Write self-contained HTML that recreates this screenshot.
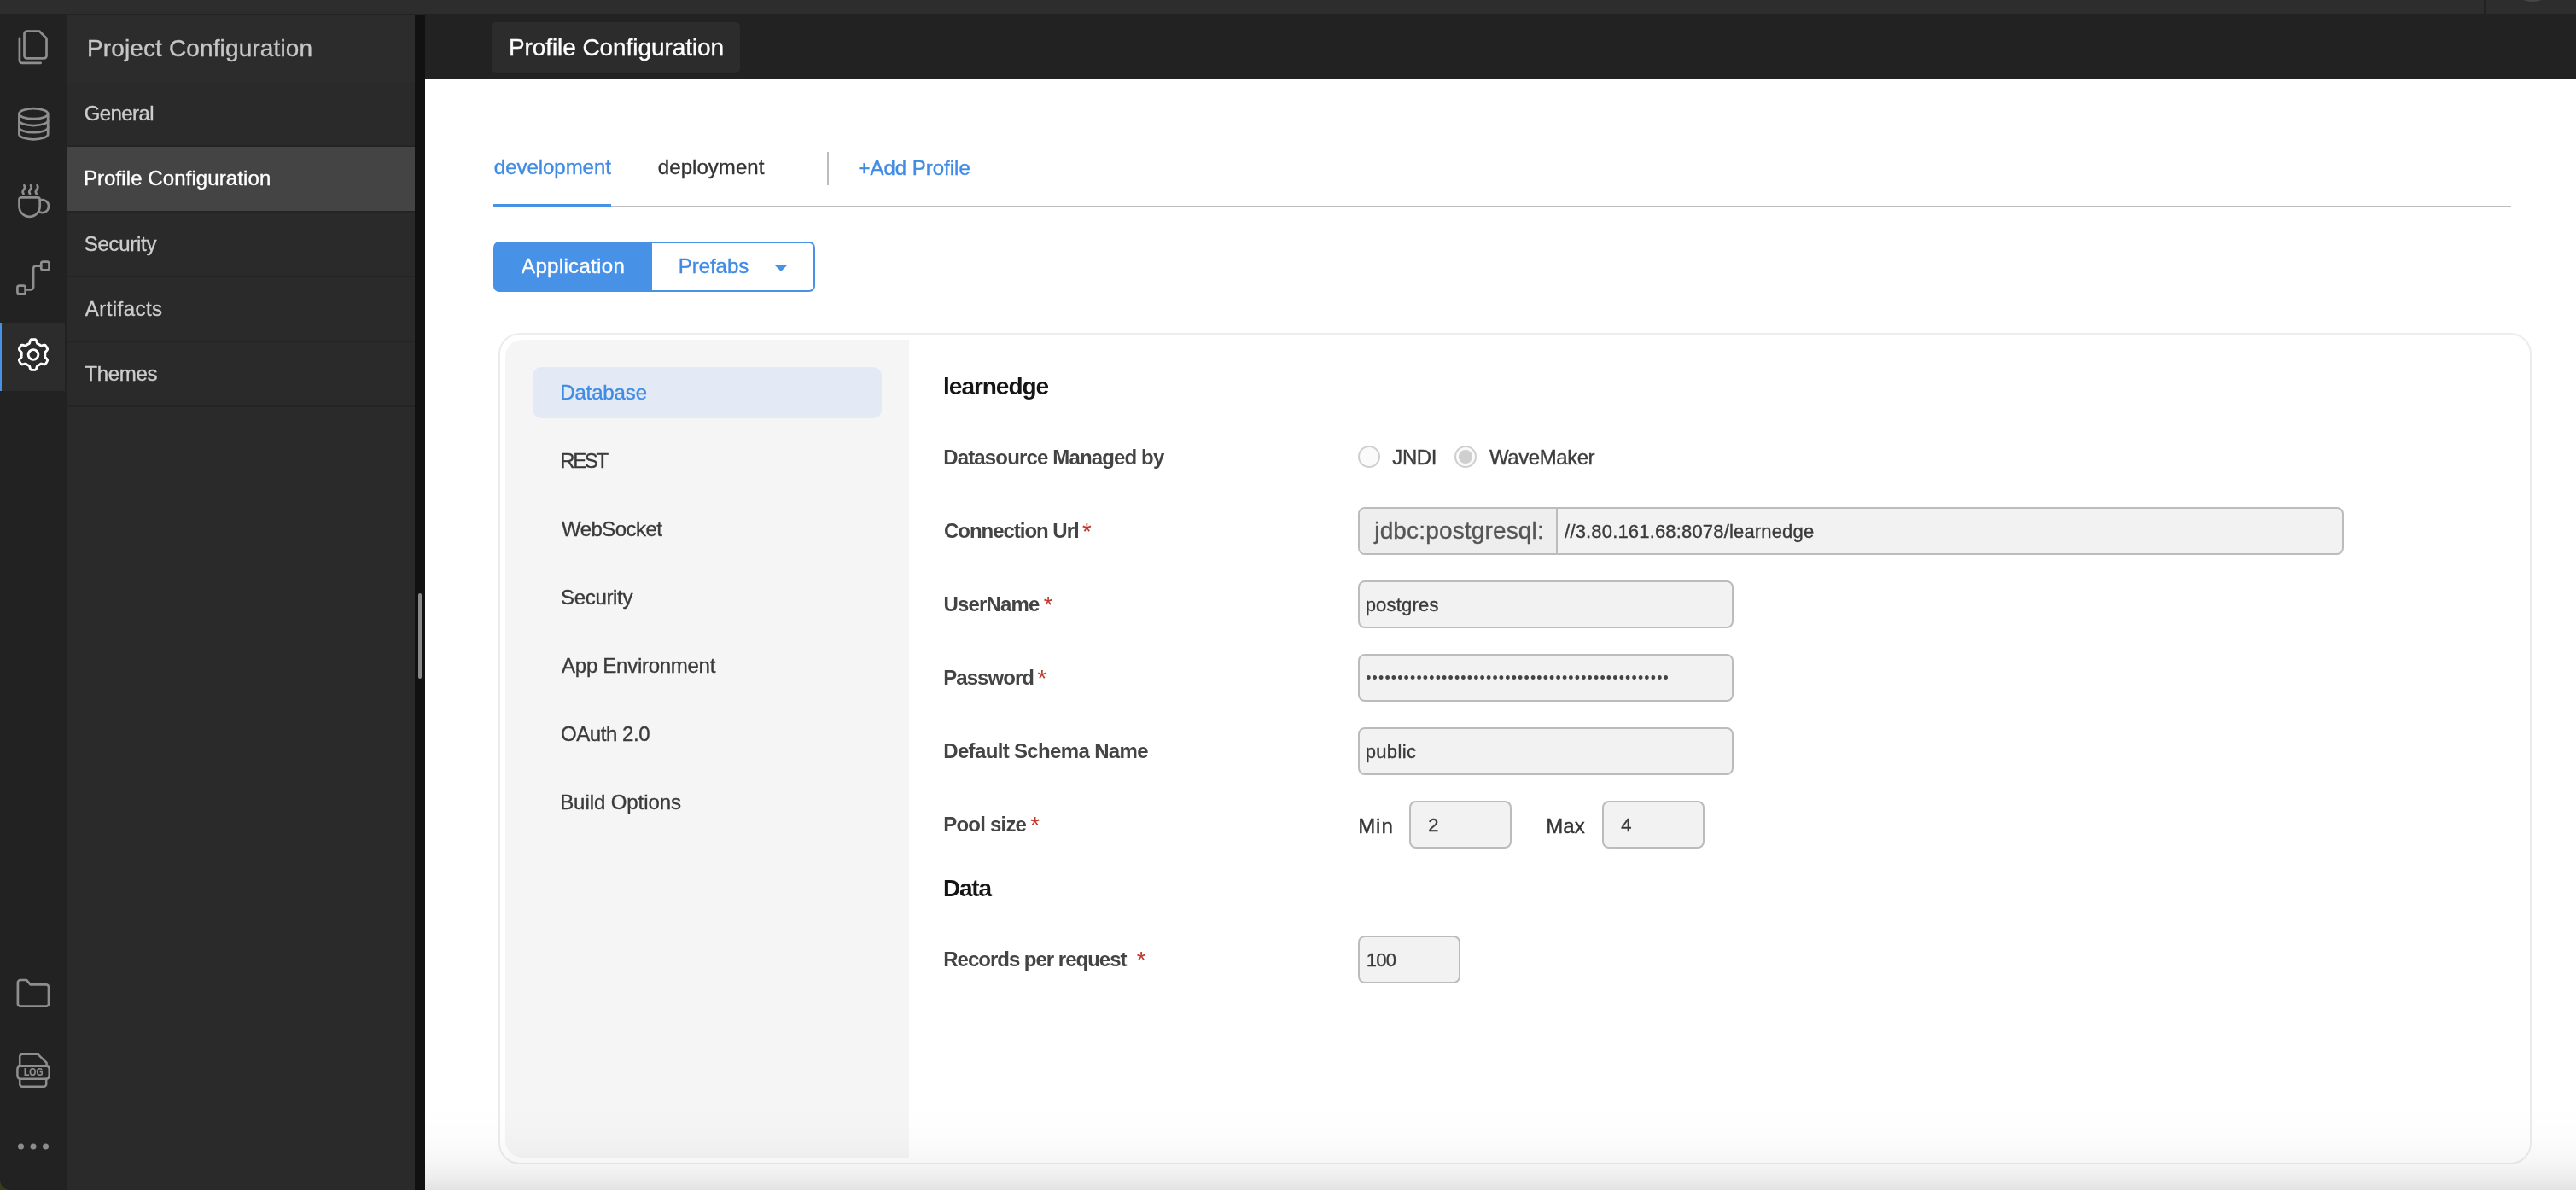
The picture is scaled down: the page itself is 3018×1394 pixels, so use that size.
<!DOCTYPE html>
<html lang="en"><head><meta charset="utf-8"><title>Profile Configuration</title>
<style>
html,body{margin:0;padding:0}
body{width:3018px;height:1394px;position:relative;overflow:hidden;background:#fff;font-family:"Liberation Sans",sans-serif;}
.a{position:absolute;box-sizing:border-box}
.t{position:absolute;white-space:pre;line-height:40px;height:40px;font-family:"Liberation Sans",sans-serif}
.inp{position:absolute;box-sizing:border-box;background:#f2f2f2;border:2px solid #bcbcbc;border-radius:8px}
.radio{position:absolute;box-sizing:border-box;width:26px;height:26px;border-radius:50%;border:2px solid #cfcfcf;background:#fafafa}
svg{position:absolute;overflow:visible}
.ic{fill:none;stroke:#8a8a8a;stroke-width:2.4;stroke-linecap:round;stroke-linejoin:round}
#root{position:absolute;left:0;top:0;width:3018px;height:1394px;overflow:hidden;will-change:transform}

</style></head>
<body>
<div id="root">
<!-- top bar -->
<div class="a" style="left:0;top:0;width:3018px;height:16px;background:#2d2d2d"></div>
<div class="a" style="left:2910px;top:0;width:2px;height:16px;background:#222"></div>
<div class="a" style="left:2935.5px;top:-59.8px;width:62px;height:62px;border-radius:50%;background:#464646"></div>
<div class="a" style="left:0;top:16px;width:3018px;height:2px;background:#232323"></div>
<!-- icon rail -->
<div class="a" style="left:0;top:16px;width:78px;height:1378px;background:#222"></div>
<div class="a" style="left:0;top:378px;width:76px;height:80px;background:#2c2c2c;border-left:2px solid #4791e6"></div>
<!-- side panel -->
<div class="a" style="left:78px;top:18px;width:408px;height:1376px;background:#2a2a2a"></div>
<div class="a" style="left:78px;top:18px;width:408px;height:78px;background:#2c2c2c"></div>
<div class="a" style="left:78px;top:170px;width:408px;height:2px;background:#242424"></div>
<div class="a" style="left:78px;top:172px;width:408px;height:75px;background:#444"></div>
<div class="a" style="left:78px;top:247px;width:408px;height:2px;background:#242424"></div>
<div class="a" style="left:78px;top:323px;width:408px;height:2px;background:#242424"></div>
<div class="a" style="left:78px;top:399px;width:408px;height:2px;background:#242424"></div>
<div class="a" style="left:78px;top:475px;width:408px;height:2px;background:#242424"></div>
<!-- splitter -->
<div class="a" style="left:486px;top:18px;width:12px;height:1376px;background:#111"></div>
<div class="a" style="left:490px;top:695px;width:4px;height:100px;background:#888;border-radius:2px"></div>
<!-- main header -->
<div class="a" style="left:498px;top:16px;width:2520px;height:76.5px;background:#222"></div>
<div class="a" style="left:576px;top:26px;width:291px;height:59px;background:#2c2c2c;border-radius:5px"></div>
<!-- tabs -->
<div class="a" style="left:578px;top:241px;width:2363.5px;height:2px;background:#bdbdbd"></div>
<div class="a" style="left:578px;top:239px;width:138px;height:4px;background:#4791e6"></div>
<div class="a" style="left:969px;top:178px;width:2px;height:39px;background:#bdbdbd"></div>
<!-- button group -->
<div class="a" style="left:578px;top:283px;width:186px;height:59px;background:#4791e6;border-radius:7px 0 0 7px"></div>
<div class="a" style="left:762px;top:283px;width:193px;height:59px;background:#fff;border:2px solid #4791e6;border-radius:0 7px 7px 0"></div>
<div class="a" style="left:907px;top:310px;width:0;height:0;border-left:8px solid transparent;border-right:8px solid transparent;border-top:8px solid #4791e6"></div>
<!-- card -->
<div class="a" style="left:584px;top:390px;width:2382px;height:974px;border:2px solid #ececec;border-radius:25px;background:#fff"></div>
<div class="a" style="left:592px;top:398px;width:473px;height:957.5px;background:#f5f5f5;border-radius:20px 0 0 20px"></div>
<div class="a" style="left:624px;top:430px;width:409px;height:60px;background:#e3eaf5;border-radius:10px"></div>
<!-- radios -->
<div class="radio" style="left:1591px;top:522px"></div>
<div class="radio" style="left:1704px;top:522px"></div>
<div class="a" style="left:1709.2px;top:527.2px;width:15.6px;height:15.6px;border-radius:50%;background:#cfcfcf"></div>
<!-- inputs -->
<div class="inp" style="left:1591px;top:594px;width:1155px;height:56px"></div>
<div class="a" style="left:1593px;top:596px;width:230px;height:52px;background:#eee;border-radius:6px 0 0 6px"></div>
<div class="a" style="left:1823px;top:596px;width:2px;height:52px;background:#bcbcbc"></div>
<div class="inp" style="left:1591px;top:680px;width:440px;height:56px"></div>
<div class="inp" style="left:1591px;top:766px;width:440px;height:56px"></div>
<div class="inp" style="left:1591px;top:852px;width:440px;height:56px"></div>
<div class="inp" style="left:1651px;top:938px;width:120px;height:56px"></div>
<div class="inp" style="left:1877px;top:938px;width:120px;height:56px"></div>
<div class="inp" style="left:1591px;top:1096px;width:120px;height:56px"></div>
<!-- bottom shade -->
<div class="a" style="left:498px;top:1294px;width:2520px;height:100px;background:linear-gradient(to bottom,rgba(0,0,0,0) 0%,rgba(0,0,0,0.008) 32%,rgba(0,0,0,0.02) 51%,rgba(0,0,0,0.035) 68%,rgba(0,0,0,0.065) 84%,rgba(0,0,0,0.11) 100%)"></div>
<div class="a" style="left:0;top:1382px;width:12px;height:12px;background:radial-gradient(circle at 12px 0,#222 11.5px,#33401c 12.5px)"></div>

<span class="t" style="left:101.91px;top:37.00px;font-size:28px;color:#c6c6c6;-webkit-text-stroke:0.35px;letter-spacing:0.134px;">Project Configuration</span>
<span class="t" style="left:98.65px;top:113.00px;font-size:24px;color:#cdcdcd;-webkit-text-stroke:0.35px;letter-spacing:-0.592px;">General</span>
<span class="t" style="left:97.95px;top:189.00px;font-size:24px;color:#ffffff;-webkit-text-stroke:0.35px;letter-spacing:0.092px;">Profile Configuration</span>
<span class="t" style="left:98.85px;top:266.00px;font-size:24px;color:#cdcdcd;-webkit-text-stroke:0.35px;letter-spacing:-0.299px;">Security</span>
<span class="t" style="left:99.85px;top:342.00px;font-size:24px;color:#cdcdcd;-webkit-text-stroke:0.35px;letter-spacing:0.433px;">Artifacts</span>
<span class="t" style="left:99.35px;top:418.00px;font-size:24px;color:#cdcdcd;-webkit-text-stroke:0.35px;letter-spacing:-0.329px;">Themes</span>
<span class="t" style="left:595.91px;top:36.00px;font-size:28px;color:#ffffff;-webkit-text-stroke:0.35px;letter-spacing:-0.072px;">Profile Configuration</span>
<span class="t" style="left:578.85px;top:176.00px;font-size:24px;color:#3f8be4;-webkit-text-stroke:0.35px;letter-spacing:-0.041px;">development</span>
<span class="t" style="left:770.85px;top:176.00px;font-size:24px;color:#333;-webkit-text-stroke:0.35px;letter-spacing:0.049px;">deployment</span>
<span class="t" style="left:1005.50px;top:177.00px;font-size:24px;color:#3f8be4;-webkit-text-stroke:0.35px;letter-spacing:-0.015px;">+Add Profile</span>
<span class="t" style="left:611.10px;top:292.00px;font-size:24px;color:#fff;-webkit-text-stroke:0.35px;letter-spacing:0.324px;">Application</span>
<span class="t" style="left:794.70px;top:292.00px;font-size:24px;color:#3f8be4;-webkit-text-stroke:0.35px;letter-spacing:-0.027px;">Prefabs</span>
<span class="t" style="left:656.20px;top:440.00px;font-size:24px;color:#3f8be4;-webkit-text-stroke:0.35px;letter-spacing:-0.134px;">Database</span>
<span class="t" style="left:656.20px;top:520.00px;font-size:24px;color:#3a3a3a;-webkit-text-stroke:0.35px;letter-spacing:-2.349px;">REST</span>
<span class="t" style="left:658.00px;top:600.00px;font-size:24px;color:#3a3a3a;-webkit-text-stroke:0.35px;letter-spacing:-0.552px;">WebSocket</span>
<span class="t" style="left:657.10px;top:680.00px;font-size:24px;color:#3a3a3a;-webkit-text-stroke:0.35px;letter-spacing:-0.335px;">Security</span>
<span class="t" style="left:658.10px;top:760.00px;font-size:24px;color:#3a3a3a;-webkit-text-stroke:0.35px;letter-spacing:-0.274px;">App Environment</span>
<span class="t" style="left:657.00px;top:840.00px;font-size:24px;color:#3a3a3a;-webkit-text-stroke:0.35px;letter-spacing:-0.440px;">OAuth 2.0</span>
<span class="t" style="left:656.20px;top:920.00px;font-size:24px;color:#3a3a3a;-webkit-text-stroke:0.35px;letter-spacing:-0.079px;">Build Options</span>
<span class="t" style="left:1105.10px;top:433.00px;font-size:28px;color:#151515;font-weight:700;letter-spacing:-1.029px;">learnedge</span>
<span class="t" style="left:1105.10px;top:1021.00px;font-size:28px;color:#151515;font-weight:700;letter-spacing:-1.256px;">Data</span>
<span class="t" style="left:1105.25px;top:516.00px;font-size:24px;color:#444;font-weight:700;letter-spacing:-0.854px;">Datasource Managed by</span>
<span class="t" style="left:1105.95px;top:602.00px;font-size:24px;color:#444;font-weight:700;letter-spacing:-1.025px;">Connection Url</span>
<span class="t" style="left:1105.45px;top:688.00px;font-size:24px;color:#444;font-weight:700;letter-spacing:-0.820px;">UserName</span>
<span class="t" style="left:1105.25px;top:774.00px;font-size:24px;color:#444;font-weight:700;letter-spacing:-0.946px;">Password</span>
<span class="t" style="left:1105.25px;top:860.00px;font-size:24px;color:#444;font-weight:700;letter-spacing:-0.655px;">Default Schema Name</span>
<span class="t" style="left:1105.25px;top:946.00px;font-size:24px;color:#444;font-weight:700;letter-spacing:-0.791px;">Pool size</span>
<span class="t" style="left:1105.25px;top:1104.00px;font-size:24px;color:#444;font-weight:700;letter-spacing:-1.010px;">Records per request</span>
<span class="t" style="left:1631.35px;top:516.00px;font-size:24px;color:#3d3d3d;-webkit-text-stroke:0.35px;letter-spacing:-0.405px;">JNDI</span>
<span class="t" style="left:1745.00px;top:516.00px;font-size:24px;color:#3d3d3d;-webkit-text-stroke:0.35px;letter-spacing:-0.443px;">WaveMaker</span>
<span class="t" style="left:1610.27px;top:602.00px;font-size:28px;color:#555;-webkit-text-stroke:0.35px;letter-spacing:0.156px;">jdbc:postgresql:</span>
<span class="t" style="left:1833.10px;top:603.00px;font-size:22px;color:#3a3a3a;-webkit-text-stroke:0.35px;letter-spacing:0.169px;">//3.80.161.68:8078/learnedge</span>
<span class="t" style="left:1599.70px;top:689.00px;font-size:22px;color:#3a3a3a;-webkit-text-stroke:0.35px;letter-spacing:0.189px;">postgres</span>
<span class="t" style="left:1599.70px;top:861.00px;font-size:22px;color:#3a3a3a;-webkit-text-stroke:0.35px;letter-spacing:0.354px;">public</span>
<span class="t" style="left:1673.25px;top:947.00px;font-size:22px;color:#3a3a3a;-webkit-text-stroke:0.35px;">2</span>
<span class="t" style="left:1899.35px;top:947.00px;font-size:22px;color:#3a3a3a;-webkit-text-stroke:0.35px;">4</span>
<span class="t" style="left:1600.75px;top:1105.00px;font-size:22px;color:#3a3a3a;-webkit-text-stroke:0.35px;letter-spacing:-0.710px;">100</span>
<span class="t" style="left:1591.20px;top:948.00px;font-size:24px;color:#333;-webkit-text-stroke:0.35px;letter-spacing:0.938px;">Min</span>
<span class="t" style="left:1811.20px;top:948.00px;font-size:24px;color:#333;-webkit-text-stroke:0.35px;letter-spacing:0.055px;">Max</span>
<span class="t" style="left:1267.96px;top:603px;font-size:27.5px;color:#c4392c">*</span>
<span class="t" style="left:1222.86px;top:689px;font-size:27.5px;color:#c4392c">*</span>
<span class="t" style="left:1215.61px;top:775px;font-size:27.5px;color:#c4392c">*</span>
<span class="t" style="left:1207.36px;top:947px;font-size:27.5px;color:#c4392c">*</span>
<span class="t" style="left:1331.86px;top:1105px;font-size:27.5px;color:#c4392c">*</span>
<span class="t" style="left:1600.15px;top:774px;font-size:17.8px;color:#444;letter-spacing:1.188px">••••••••••••••••••••••••••••••••••••••••••••••••</span>
<span class="t" style="left:27.6px;top:1236px;font-size:12px;font-weight:700;color:#8e8e8e;-webkit-text-stroke:0.25px;transform:scaleX(0.865);transform-origin:0 50%">LOG</span>
<svg class="icons" width="80" height="1394" viewBox="0 0 80 1394" style="left:0;top:0">
<g fill="none" stroke="#8e8e8e" stroke-width="2.7" stroke-linecap="round" stroke-linejoin="round">
<path d="M31.5 36.7 H46.3 L54.5 44.9 V65.3 a3 3 0 0 1 -3 3 H31.5 a3 3 0 0 1 -3 -3 V39.7 a3 3 0 0 1 3 -3 Z"/>
<path d="M22.9 44.8 V70.8 a3 3 0 0 0 3 3 H47.7"/>
<ellipse cx="39.3" cy="133.2" rx="16.9" ry="6"/>
<path d="M22.4 133.2 V157.3 A16.9 6 0 0 0 56.2 157.3 V133.2"/>
<path d="M22.4 141.1 A16.9 6 0 0 0 56.2 141.1"/>
<path d="M22.4 149.2 A16.9 6 0 0 0 56.2 149.2"/>
<path d="M25 231.3 H44.2 a2.5 2.5 0 0 1 2.5 2.5 V241.7 A12.1 12.1 0 0 1 22.5 241.7 V233.8 a2.5 2.5 0 0 1 2.5 -2.5 Z"/>
<path d="M46.7 234.64 A7.5 7.5 0 1 1 45.07 247.7"/>
<path d="M28.4 217.2 c1.8 2.4 0.2 3.8 -0.7 4.9 c-1.4 1.8 -1.5 3.2 -0.2 5.0"/>
<path d="M36.0 217.2 c1.8 2.4 0.2 3.8 -0.7 4.9 c-1.4 1.8 -1.5 3.2 -0.2 5.0"/>
<path d="M43.6 217.2 c1.8 2.4 0.2 3.8 -0.7 4.9 c-1.4 1.8 -1.5 3.2 -0.2 5.0"/>
<rect x="48.2" y="306.7" width="9.3" height="9.6" rx="2.2"/>
<rect x="20.4" y="334.7" width="9.3" height="9.6" rx="2.2"/>
<path d="M29.7 339.3 H36.1 a3 3 0 0 0 3 -3 V314.6 a3 3 0 0 1 3 -3 H48.2"/>
<path d="M23.9 1148 H30.3 a2 2 0 0 1 1.6 0.8 L35.6 1153.3 H54 a3 3 0 0 1 3 3 V1175.7 a3 3 0 0 1 -3 3 H23.9 a3 3 0 0 1 -3 -3 V1151 a3 3 0 0 1 3 -3 Z"/>
</g>
<g fill="none" stroke="#8e8e8e" stroke-width="2.5" stroke-linecap="round" stroke-linejoin="round">
<path d="M23.2 1248.7 V1237.8 a3 3 0 0 1 3 -3 H44.5 L54.6 1244.9 V1248.7"/>
<rect x="20.4" y="1248.7" width="37.3" height="15.1" rx="3.5"/>
<path d="M23.2 1263.8 V1269.7 a3 3 0 0 0 3 3 H51.2 a3 3 0 0 0 3 -3 V1263.8"/>
</g>
<circle cx="24.5" cy="1343" r="3.5" fill="#8c8c8c"/>
<circle cx="39" cy="1343" r="3.5" fill="#8c8c8c"/>
<circle cx="53.5" cy="1343" r="3.5" fill="#8c8c8c"/>
<g fill="none" stroke="#fff" stroke-width="2.9" stroke-linejoin="round">
<path d="M52.80 415.50 L52.80 415.26 L52.79 415.02 L52.78 414.78 L52.77 414.54 L52.75 414.30 L52.72 414.06 L52.70 413.82 L52.67 413.58 L52.63 413.34 L52.64 413.09 L52.76 412.83 L52.97 412.53 L53.25 412.21 L53.59 411.86 L53.97 411.49 L54.35 411.10 L54.72 410.69 L55.05 410.29 L55.32 409.88 L55.50 409.49 L55.60 409.13 L55.58 408.80 L55.48 408.51 L55.35 408.22 L55.22 407.94 L55.09 407.65 L54.95 407.37 L54.80 407.10 L54.66 406.82 L54.50 406.55 L54.34 406.28 L54.18 406.01 L54.01 405.75 L53.84 405.49 L53.66 405.23 L53.48 404.98 L53.30 404.73 L53.09 404.49 L52.81 404.31 L52.45 404.21 L52.02 404.18 L51.54 404.21 L51.02 404.29 L50.49 404.41 L49.96 404.54 L49.45 404.68 L48.97 404.80 L48.55 404.89 L48.20 404.92 L47.91 404.89 L47.68 404.78 L47.50 404.63 L47.31 404.48 L47.11 404.34 L46.92 404.20 L46.72 404.06 L46.52 403.93 L46.31 403.80 L46.11 403.67 L45.90 403.55 L45.69 403.43 L45.48 403.32 L45.27 403.20 L45.05 403.10 L44.83 402.99 L44.61 402.89 L44.39 402.80 L44.17 402.70 L43.95 402.62 L43.74 402.48 L43.56 402.25 L43.41 401.92 L43.28 401.51 L43.15 401.04 L43.01 400.53 L42.86 400.01 L42.70 399.48 L42.51 398.99 L42.29 398.56 L42.05 398.20 L41.78 397.94 L41.49 397.79 L41.18 397.73 L40.87 397.70 L40.56 397.67 L40.25 397.64 L39.94 397.62 L39.62 397.61 L39.31 397.60 L39.00 397.60 L38.69 397.60 L38.38 397.61 L38.06 397.62 L37.75 397.64 L37.44 397.67 L37.13 397.70 L36.82 397.73 L36.51 397.79 L36.22 397.94 L35.95 398.20 L35.71 398.56 L35.49 398.99 L35.30 399.48 L35.14 400.01 L34.99 400.53 L34.85 401.04 L34.72 401.51 L34.59 401.92 L34.44 402.25 L34.26 402.48 L34.05 402.62 L33.83 402.70 L33.61 402.80 L33.39 402.89 L33.17 402.99 L32.95 403.10 L32.73 403.20 L32.52 403.32 L32.31 403.43 L32.10 403.55 L31.89 403.67 L31.69 403.80 L31.48 403.93 L31.28 404.06 L31.08 404.20 L30.89 404.34 L30.69 404.48 L30.50 404.63 L30.32 404.78 L30.09 404.89 L29.80 404.92 L29.45 404.89 L29.03 404.80 L28.55 404.68 L28.04 404.54 L27.51 404.41 L26.98 404.29 L26.46 404.21 L25.98 404.18 L25.55 404.21 L25.19 404.31 L24.91 404.49 L24.70 404.73 L24.52 404.98 L24.34 405.23 L24.16 405.49 L23.99 405.75 L23.82 406.01 L23.66 406.28 L23.50 406.55 L23.34 406.82 L23.20 407.10 L23.05 407.37 L22.91 407.65 L22.78 407.94 L22.65 408.22 L22.52 408.51 L22.42 408.80 L22.40 409.13 L22.50 409.49 L22.68 409.88 L22.95 410.29 L23.28 410.69 L23.65 411.10 L24.03 411.49 L24.41 411.86 L24.75 412.21 L25.03 412.53 L25.24 412.83 L25.36 413.09 L25.37 413.34 L25.33 413.58 L25.30 413.82 L25.28 414.06 L25.25 414.30 L25.23 414.54 L25.22 414.78 L25.21 415.02 L25.20 415.26 L25.20 415.50 L25.20 415.74 L25.21 415.98 L25.22 416.22 L25.23 416.46 L25.25 416.70 L25.28 416.94 L25.30 417.18 L25.33 417.42 L25.37 417.66 L25.36 417.91 L25.24 418.17 L25.03 418.47 L24.75 418.79 L24.41 419.14 L24.03 419.51 L23.65 419.90 L23.28 420.31 L22.95 420.71 L22.68 421.12 L22.50 421.51 L22.40 421.87 L22.42 422.20 L22.52 422.49 L22.65 422.78 L22.78 423.06 L22.91 423.35 L23.05 423.63 L23.20 423.90 L23.34 424.18 L23.50 424.45 L23.66 424.72 L23.82 424.99 L23.99 425.25 L24.16 425.51 L24.34 425.77 L24.52 426.02 L24.70 426.27 L24.91 426.51 L25.19 426.69 L25.55 426.79 L25.98 426.82 L26.46 426.79 L26.98 426.71 L27.51 426.59 L28.04 426.46 L28.55 426.32 L29.03 426.20 L29.45 426.11 L29.80 426.08 L30.09 426.11 L30.32 426.22 L30.50 426.37 L30.69 426.52 L30.89 426.66 L31.08 426.80 L31.28 426.94 L31.48 427.07 L31.69 427.20 L31.89 427.33 L32.10 427.45 L32.31 427.57 L32.52 427.68 L32.73 427.80 L32.95 427.90 L33.17 428.01 L33.39 428.11 L33.61 428.20 L33.83 428.30 L34.05 428.38 L34.26 428.52 L34.44 428.75 L34.59 429.08 L34.72 429.49 L34.85 429.96 L34.99 430.47 L35.14 430.99 L35.30 431.52 L35.49 432.01 L35.71 432.44 L35.95 432.80 L36.22 433.06 L36.51 433.21 L36.82 433.27 L37.13 433.30 L37.44 433.33 L37.75 433.36 L38.06 433.38 L38.38 433.39 L38.69 433.40 L39.00 433.40 L39.31 433.40 L39.62 433.39 L39.94 433.38 L40.25 433.36 L40.56 433.33 L40.87 433.30 L41.18 433.27 L41.49 433.21 L41.78 433.06 L42.05 432.80 L42.29 432.44 L42.51 432.01 L42.70 431.52 L42.86 430.99 L43.01 430.47 L43.15 429.96 L43.28 429.49 L43.41 429.08 L43.56 428.75 L43.74 428.52 L43.95 428.38 L44.17 428.30 L44.39 428.20 L44.61 428.11 L44.83 428.01 L45.05 427.90 L45.27 427.80 L45.48 427.68 L45.69 427.57 L45.90 427.45 L46.11 427.33 L46.31 427.20 L46.52 427.07 L46.72 426.94 L46.92 426.80 L47.11 426.66 L47.31 426.52 L47.50 426.37 L47.68 426.22 L47.91 426.11 L48.20 426.08 L48.55 426.11 L48.97 426.20 L49.45 426.32 L49.96 426.46 L50.49 426.59 L51.02 426.71 L51.54 426.79 L52.02 426.82 L52.45 426.79 L52.81 426.69 L53.09 426.51 L53.30 426.27 L53.48 426.02 L53.66 425.77 L53.84 425.51 L54.01 425.25 L54.18 424.99 L54.34 424.72 L54.50 424.45 L54.66 424.18 L54.80 423.90 L54.95 423.63 L55.09 423.35 L55.22 423.06 L55.35 422.78 L55.48 422.49 L55.58 422.20 L55.60 421.87 L55.50 421.51 L55.32 421.12 L55.05 420.71 L54.72 420.31 L54.35 419.90 L53.97 419.51 L53.59 419.14 L53.25 418.79 L52.97 418.47 L52.76 418.17 L52.64 417.91 L52.63 417.66 L52.67 417.42 L52.70 417.18 L52.72 416.94 L52.75 416.70 L52.77 416.46 L52.78 416.22 L52.79 415.98 L52.80 415.74 Z"/>
<circle cx="39" cy="415.5" r="5.85"/>
</g>
</svg>
</div>
</body></html>
